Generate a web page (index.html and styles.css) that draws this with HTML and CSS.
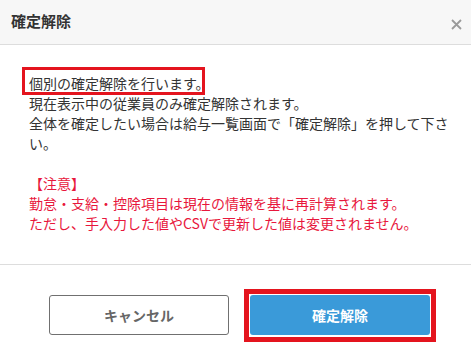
FILE: index.html
```html
<!DOCTYPE html>
<html lang="ja">
<head>
<meta charset="utf-8">
<link rel="stylesheet" href="styles.css">
</head>
<body>
<div class="modal">
  <div class="modal-header">
    <div class="modal-title">確定解除</div>
    <button class="close" aria-label="閉じる">
      <svg width="11" height="11" viewBox="0 0 11 11"><path d="M1 1 L10 10 M10 1 L1 10" stroke="#9a9a9a" stroke-width="1.8" fill="none"/></svg>
    </button>
  </div>
  <div class="modal-body">
    <p class="msg"><span class="hl">個別の確定解除を行います。</span><br>現在表示中の従業員のみ確定解除されます。<br>全体を確定したい場合は給与一覧画面で「確定解除」を押して下さい。</p>
    <p class="msg warn">【注意】<br>勤怠・支給・控除項目は現在の情報を基に再計算されます。<br>ただし、手入力した値やCSVで更新した値は変更されません。</p>
  </div>
  <div class="modal-footer">
    <button class="btn btn-cancel">キャンセル</button>
    <button class="btn btn-primary">確定解除</button>
  </div>
</div>
</body>
</html>
```
FILE: styles.css
```css
html, body {
  margin: 0;
  padding: 0;
  background: #ffffff;
}
body {
  font-family: "Noto Sans CJK JP", "Noto Sans", sans-serif;
  color: #333333;
}
.modal {
  width: 471px;
  height: 345px;
  overflow: hidden;
  background: #ffffff;
}
.modal-header {
  height: 45px;
  box-sizing: border-box;
  border-bottom: 1px solid #dddddd;
  background: #f7f7f7;
  display: flex;
  align-items: flex-start;
  justify-content: space-between;
  padding: 10px 9px 0 11px;
}
.modal-title {
  font-size: 15px;
  font-weight: bold;
  line-height: 22px;
  color: #333333;
}
.close {
  border: 0;
  background: transparent;
  padding: 0;
  margin-top: 9px;
  width: 11px;
  height: 11px;
  display: flex;
}
.modal-body {
  padding: 28px 14px 31px 29px;
  border-bottom: 1px solid #dddddd;
}
.msg {
  margin: 0;
  font-size: 14px;
  line-height: 20px;
}
.msg + .msg {
  margin-top: 20px;
}
.warn {
  color: #e8173c;
}
.hl {
  display: inline-block;
  position: relative;
}
.hl::after {
  content: "";
  position: absolute;
  left: -7px;
  top: -6px;
  width: 183px;
  height: 28px;
  box-sizing: border-box;
  border: 3px solid #e4141e;
}
.modal-footer {
  display: flex;
  gap: 21px;
  padding: 30px 0 0 49px;
}
.btn {
  width: 180px;
  height: 40px;
  box-sizing: border-box;
  border-radius: 3px;
  font-family: "Noto Sans CJK JP", "Noto Sans", sans-serif;
  font-size: 14px;
  font-weight: bold;
  cursor: pointer;
}
.btn-cancel {
  background: #ffffff;
  border: 1px solid #707070;
  color: #666666;
}
.btn-primary {
  position: relative;
  background: #3a9ad9;
  border: 0;
  color: #ffffff;
}
.btn-primary::after {
  content: "";
  position: absolute;
  left: -6px;
  top: -6px;
  right: -6px;
  bottom: -7px;
  border: 5px solid #e4141e;
}
```
